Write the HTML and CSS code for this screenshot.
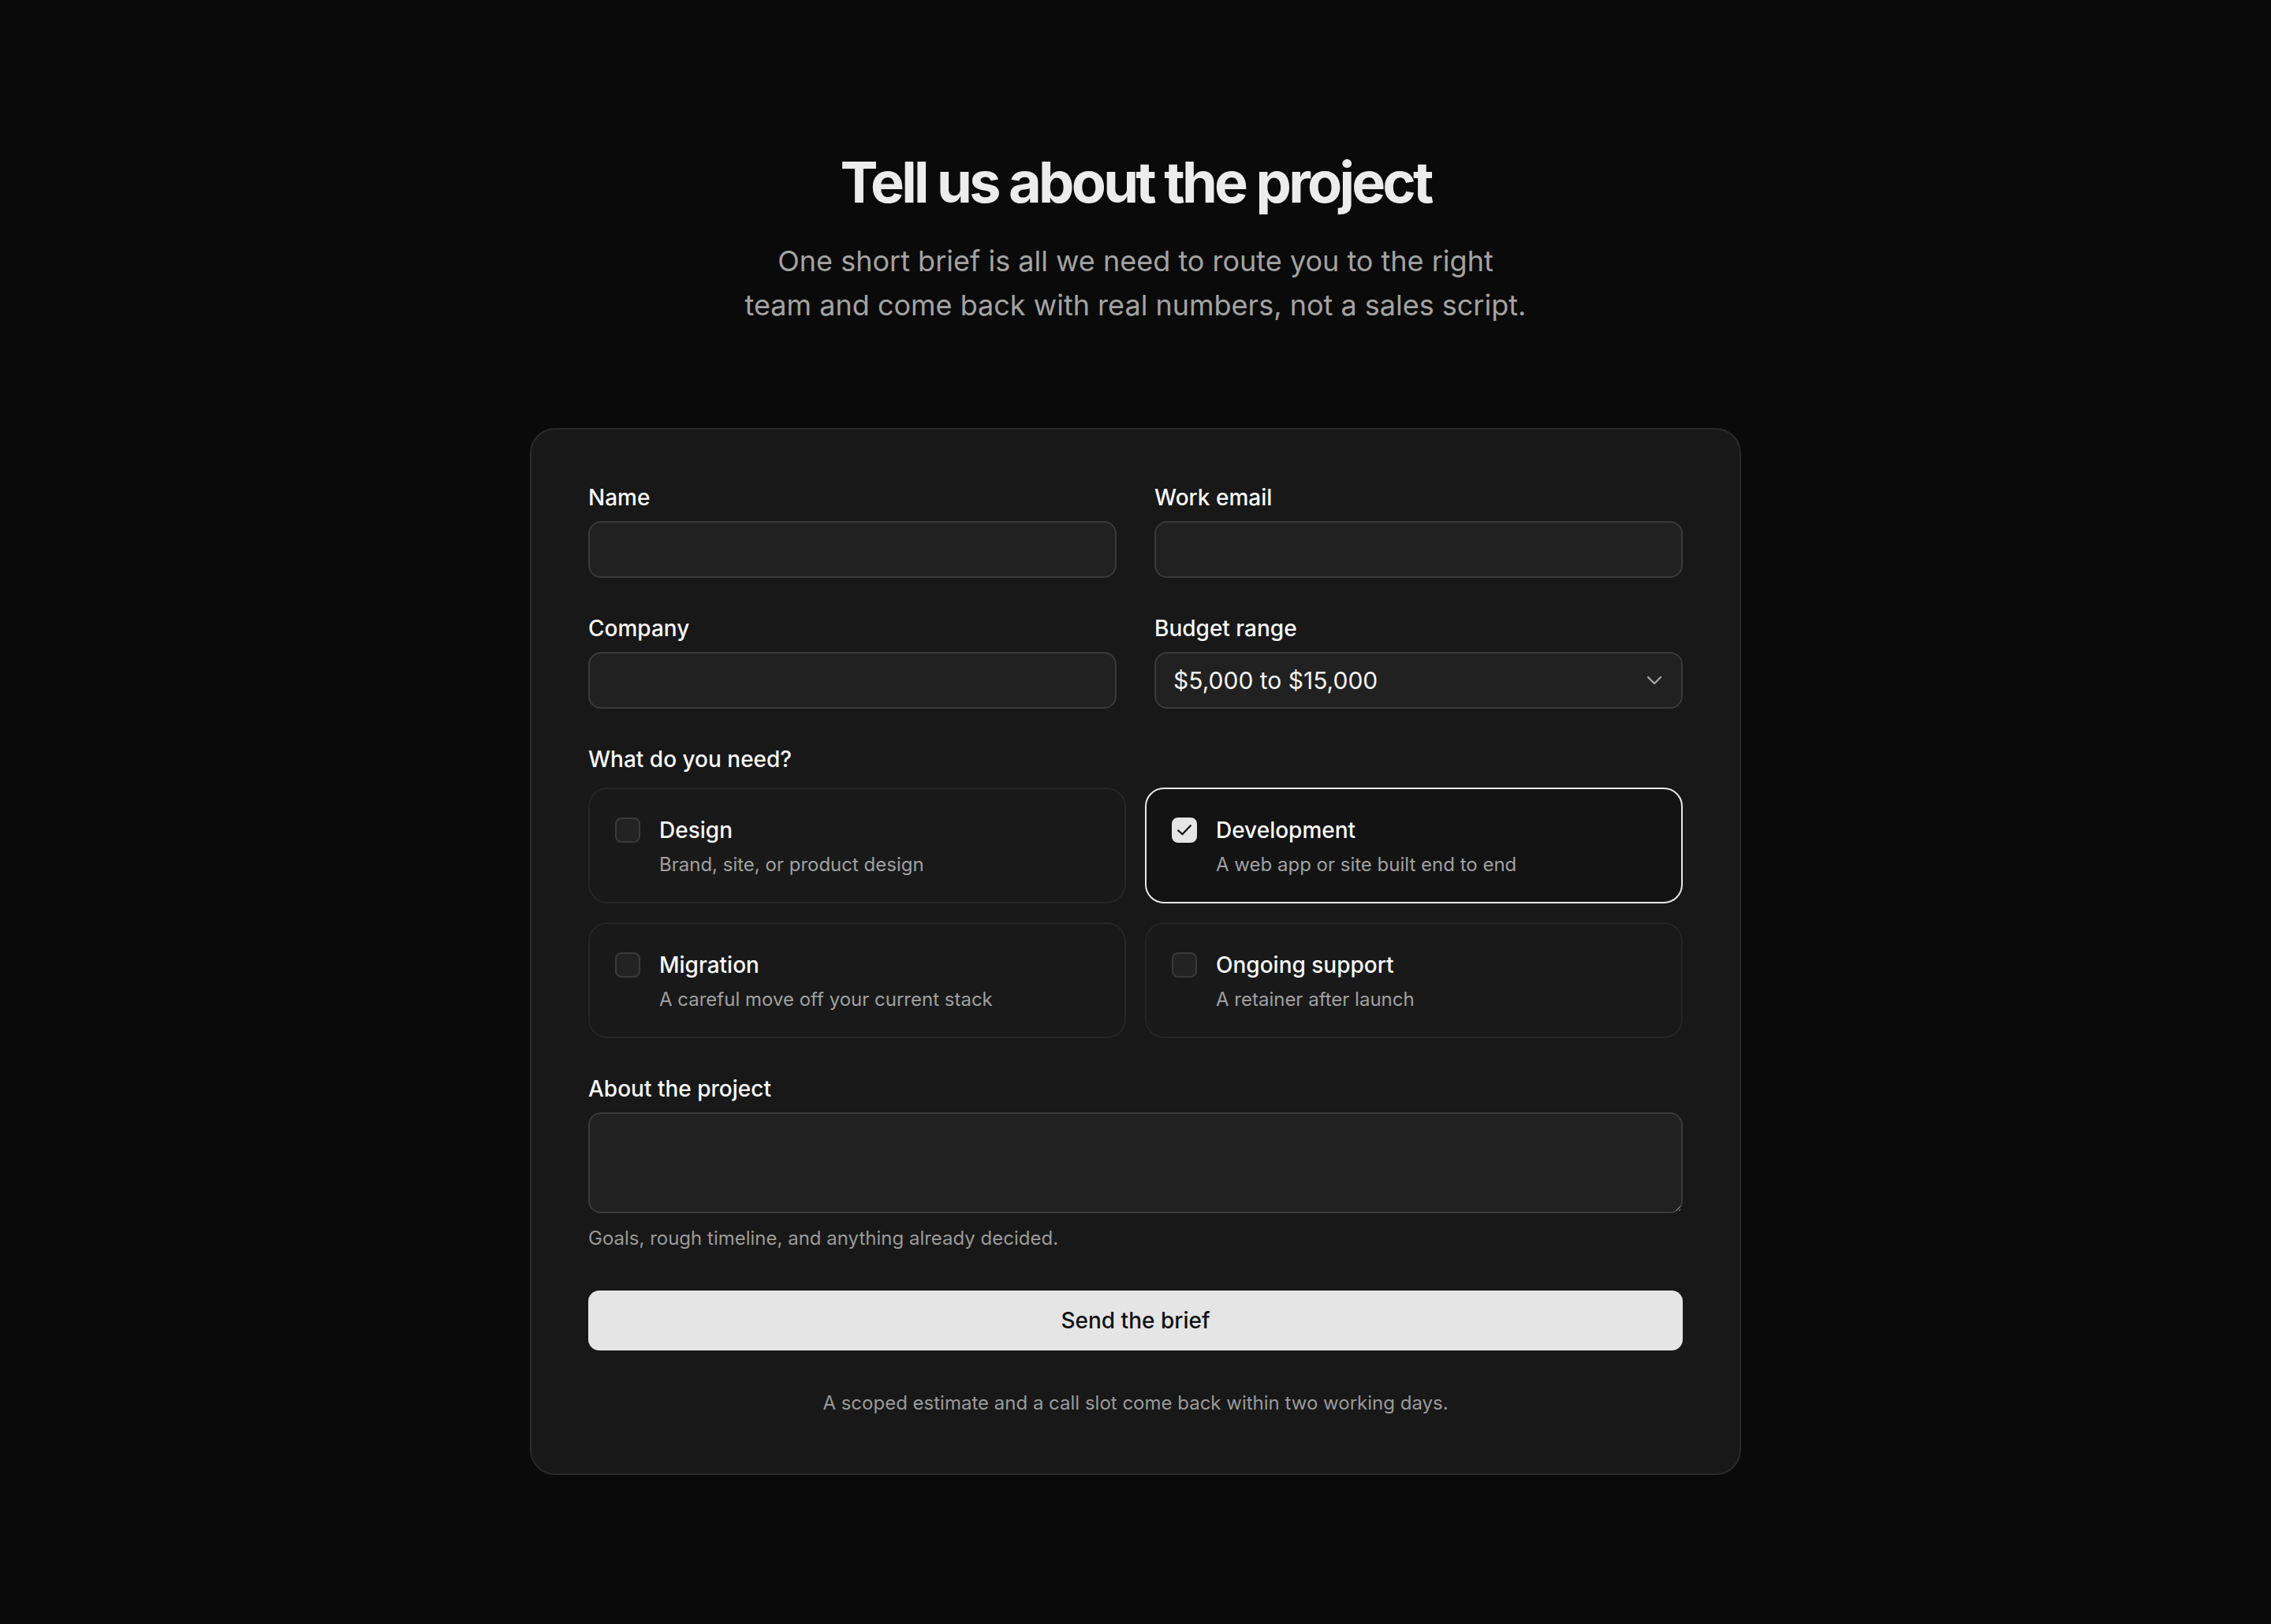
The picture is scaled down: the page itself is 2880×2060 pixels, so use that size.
FILE: index.html
```html
<!DOCTYPE html>
<html lang="en">
<head>
  <meta charset="UTF-8">
  <title>Project brief</title>
  <link rel="stylesheet" href="styles.css">
</head>
<body>

  <main class="page">

    <!-- Intro -->
    <header class="intro">
      <h1 class="intro-title">Tell us about the project</h1>
      <p class="intro-lede">One short brief is all we need to route you to the right team and come back with real numbers, not a sales script.</p>
    </header>

    <!-- Brief form -->
    <form class="brief">

      <div class="field-grid">
        <div class="field">
          <label class="field-label" for="name">Name</label>
          <input class="control" id="name" type="text">
        </div>
        <div class="field">
          <label class="field-label" for="email">Work email</label>
          <input class="control" id="email" type="email">
        </div>
        <div class="field">
          <label class="field-label" for="company">Company</label>
          <input class="control" id="company" type="text">
        </div>
        <div class="field">
          <label class="field-label" for="budget">Budget range</label>
          <div class="select-wrap">
            <select class="control control-select" id="budget">
              <option>Under $5,000</option>
              <option selected>$5,000 to $15,000</option>
              <option>$15,000 to $50,000</option>
              <option>$50,000+</option>
            </select>
            <svg class="select-chevron" width="20" height="12" viewBox="0 0 20 12" fill="none">
              <path d="M2 2l8 8 8-8" stroke="currentColor" stroke-width="2.4" stroke-linecap="round" stroke-linejoin="round"/>
            </svg>
          </div>
        </div>
      </div>

      <div class="section">
        <p class="field-label needs-label">What do you need?</p>
        <div class="option-grid">
          <label class="option">
            <input class="option-input" type="checkbox">
            <span class="option-box"><svg viewBox="0 0 32 32" fill="none"><path d="M7 16.5l6 5.5 12-12.5" stroke="currentColor" stroke-width="2.6" stroke-linecap="round" stroke-linejoin="round"/></svg></span>
            <span class="option-text">
              <span class="option-title">Design</span>
              <span class="option-desc">Brand, site, or product design</span>
            </span>
          </label>
          <label class="option">
            <input class="option-input" type="checkbox" checked>
            <span class="option-box"><svg viewBox="0 0 32 32" fill="none"><path d="M7 16.5l6 5.5 12-12.5" stroke="currentColor" stroke-width="2.6" stroke-linecap="round" stroke-linejoin="round"/></svg></span>
            <span class="option-text">
              <span class="option-title">Development</span>
              <span class="option-desc">A web app or site built end to end</span>
            </span>
          </label>
          <label class="option">
            <input class="option-input" type="checkbox">
            <span class="option-box"><svg viewBox="0 0 32 32" fill="none"><path d="M7 16.5l6 5.5 12-12.5" stroke="currentColor" stroke-width="2.6" stroke-linecap="round" stroke-linejoin="round"/></svg></span>
            <span class="option-text">
              <span class="option-title">Migration</span>
              <span class="option-desc">A careful move off your current stack</span>
            </span>
          </label>
          <label class="option">
            <input class="option-input" type="checkbox">
            <span class="option-box"><svg viewBox="0 0 32 32" fill="none"><path d="M7 16.5l6 5.5 12-12.5" stroke="currentColor" stroke-width="2.6" stroke-linecap="round" stroke-linejoin="round"/></svg></span>
            <span class="option-text">
              <span class="option-title">Ongoing support</span>
              <span class="option-desc">A retainer after launch</span>
            </span>
          </label>
        </div>
      </div>

      <div class="section field">
        <label class="field-label" for="about">About the project</label>
        <textarea class="control control-area" id="about"></textarea>
        <p class="hint">Goals, rough timeline, and anything already decided.</p>
      </div>

      <button class="submit" type="button">Send the brief</button>

      <p class="footnote">A scoped estimate and a call slot come back within two working days.</p>
    </form>

  </main>

</body>
</html>
```
FILE: styles.css
```css
/* Base */
* {
  box-sizing: border-box;
}
body {
  margin: 0;
  background: #0a0a0a;
  color: #fafafa;
  font-family: Inter, "Noto Sans", sans-serif;
}

/* Page: everything centred in the viewport */
.page {
  min-height: 100vh;
  display: flex;
  flex-direction: column;
  align-items: center;
  justify-content: center;
  padding: 44px 0 40px;
}

/* Intro */
.intro {
  text-align: center;
  margin-bottom: 128px;
}
.intro-title {
  margin: 0;
  font-size: 72px;
  line-height: 76px;
  font-weight: 700;
  letter-spacing: -0.052em;
  color: #ececec;
}
.intro-lede {
  margin: 34px auto 0;
  max-width: 1000px;
  font-size: 36px;
  line-height: 56px;
  color: #a3a3a3;
}

/* Card */
.brief {
  width: 1536px;
  padding: 70px 72px 73px;
  background: #181818;
  border: 2px solid #2a2a2a;
  border-radius: 32px;
}

.field-grid {
  display: grid;
  grid-template-columns: 1fr 1fr;
  gap: 48px;
}
.field {
  display: flex;
  flex-direction: column;
}
.field-label {
  margin: 0 0 14px;
  font-size: 28px;
  line-height: 32px;
  font-weight: 500;
  color: #fafafa;
}

/* Inputs */
.control {
  width: 100%;
  height: 72px;
  padding: 0 22px;
  background: #212121;
  border: 2px solid #3a3a3a;
  border-radius: 16px;
  color: #f5f5f5;
  font: inherit;
  font-size: 30px;
  outline: none;
}
.select-wrap {
  position: relative;
}
.control-select {
  appearance: none;
  -webkit-appearance: none;
  padding-right: 72px;
}
.select-chevron {
  position: absolute;
  right: 26px;
  top: 30px;
  color: #a3a3a3;
  pointer-events: none;
}
.control-area {
  height: 128px;
  padding: 16px 22px;
  resize: vertical;
}

.section {
  margin-top: 48px;
}
.needs-label {
  margin-bottom: 20px;
}

/* Service options */
.option-grid {
  display: grid;
  grid-template-columns: 1fr 1fr;
  gap: 24px;
}
.option {
  display: flex;
  align-items: flex-start;
  gap: 24px;
  padding: 32px 32px 31px;
  border: 2px solid #252525;
  border-radius: 24px;
  background: #191919;
  cursor: pointer;
}
.option:has(.option-input:checked) {
  border-color: #e8e8e8;
  background: #131313;
}
.option-input {
  position: absolute;
  opacity: 0;
  width: 0;
  height: 0;
}
.option-box {
  flex: none;
  width: 32px;
  height: 32px;
  margin-top: 4px;
  border: 2px solid #3a3a3a;
  border-radius: 8px;
  background: #232323;
  color: #111;
}
.option-box svg {
  display: none;
  width: 100%;
  height: 100%;
}
.option-input:checked + .option-box {
  background: #e5e5e5;
  border-color: #e5e5e5;
}
.option-input:checked + .option-box svg {
  display: block;
}
.option-text {
  display: flex;
  flex-direction: column;
  gap: 8px;
}
.option-title {
  font-size: 28px;
  line-height: 40px;
  font-weight: 500;
  color: #fafafa;
}
.option-desc {
  font-size: 24px;
  line-height: 32px;
  color: #a0a0a0;
}

.hint {
  margin: 16px 0 0;
  font-size: 24px;
  line-height: 32px;
  color: #9a9a9a;
}

/* Submit */
.submit {
  display: block;
  width: 100%;
  height: 76px;
  margin-top: 50px;
  border: none;
  border-radius: 14px;
  background: #e5e5e5;
  color: #111;
  font: inherit;
  font-size: 28px;
  font-weight: 500;
  cursor: pointer;
}

.footnote {
  margin: 51px 0 0;
  text-align: center;
  font-size: 24px;
  line-height: 32px;
  color: #9a9a9a;
}
```
